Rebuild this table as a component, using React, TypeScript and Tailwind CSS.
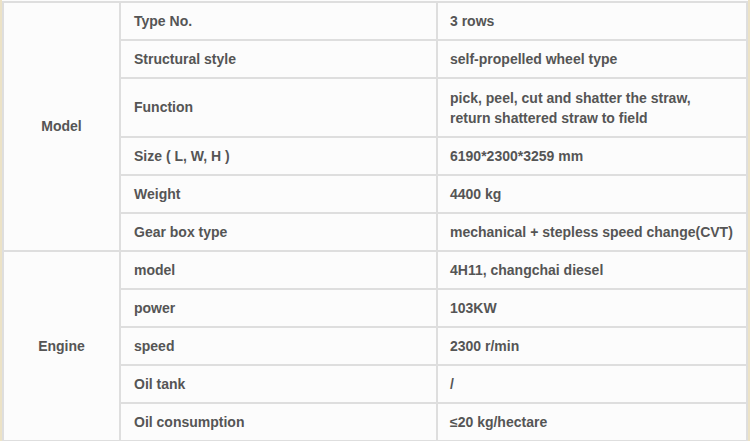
const model: [string, string[]][] = [
  ['Type No.', ['3 rows']],
  ['Structural style', ['self-propelled wheel type']],
  ['Function', ['pick, peel, cut and shatter the straw,', 'return shattered straw to field']],
  ['Size ( L, W, H )', ['6190*2300*3259 mm']],
  ['Weight', ['4400 kg']],
  ['Gear box type', ['mechanical + stepless speed change(CVT)']],
];

const engine: [string, string[]][] = [
  ['model', ['4H11, changchai diesel']],
  ['power', ['103KW']],
  ['speed', ['2300 r/min']],
  ['Oil tank', ['/']],
  ['Oil consumption', ['≤20 kg/hectare']],
];

function Group({ name, rows }: { name: string; rows: [string, string[]][] }) {
  return (
    <>
      {rows.map(([label, value], i) => (
        <tr key={label} className={value.length > 1 ? 'h-[59px]' : 'h-[38px]'}>
          {i === 0 && (
            <td rowSpan={rows.length} className="border-2 border-[#dedede] text-center align-middle">
              {name}
            </td>
          )}
          <td className="border-2 border-[#dedede] pl-[13px] align-middle">{label}</td>
          <td className="border-2 border-[#dedede] pl-[12px] align-middle leading-[20px]">
            {value.map((v) => (
              <div key={v}>{v}</div>
            ))}
          </td>
        </tr>
      ))}
    </>
  );
}

export default function App() {
  return (
    <div className="w-[750px] h-[441px] overflow-hidden bg-[#fcfcfc] border-l-2 border-r-2 border-[#ece2c6]">
      <table
        className="w-[746px] table-fixed border-collapse text-[14px] font-bold text-[#555555] mt-[1px]"
        style={{ fontFamily: '"Liberation Sans", Arial, sans-serif' }}
      >
        <colgroup>
          <col className="w-[117px]" />
          <col className="w-[317px]" />
          <col />
        </colgroup>
        <tbody>
          <Group name="Model" rows={model} />
          <Group name="Engine" rows={engine} />
        </tbody>
      </table>
    </div>
  );
}
